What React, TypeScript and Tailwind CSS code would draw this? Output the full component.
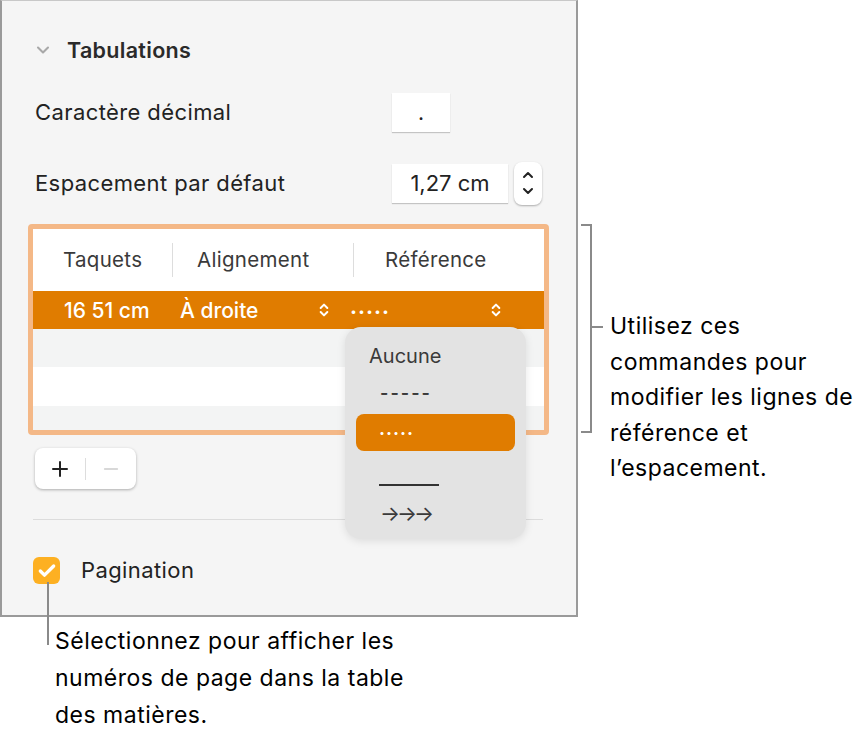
import {Check, ChevronDown, ChevronUp, ChevronsUpDown, Plus, Minus} from 'lucide-react'

const font = {fontFamily: 'Inter, "Noto Sans", sans-serif'}

function Updown({className}: {className: string}) {
  return <ChevronsUpDown className={className} strokeWidth={3} />
}

export default function App() {
  return (
    <div className="relative h-[742px] w-[860px] bg-white text-[#222]" style={font}>
      {/* inspector panel */}
      <div className="flex h-[617px] w-[578px] flex-col border-2 border-t border-[#9a9a9a] border-t-[#c8c8c8] bg-[#f5f5f5] pl-[26px] pr-[34px]">
        <div className="mt-[33px] flex items-center gap-[14px] pl-[5px]">
          <ChevronDown className="size-[20px] text-[#a8a8a8]" strokeWidth={2.5} />
          <span className="text-[21.5px] font-semibold tracking-[0.3px] text-[#2a2a2a]">Tabulations</span>
        </div>

        <div className="mt-[26px] flex h-[40px] items-center pl-[7px]">
          <span className="flex-1 text-[22px] tracking-[0.4px]">Caractère décimal</span>
          <div className="mr-[92px] flex h-[39px] w-[58px] items-center justify-center bg-white text-[21px] shadow-[0_1px_1px_rgba(0,0,0,0.2)]">.</div>
        </div>

        <div className="mt-[29px] flex h-[44px] items-center pl-[7px]">
          <span className="flex-1 text-[22px] tracking-[0.4px]">Espacement par défaut</span>
          <div className="flex h-[39px] w-[116px] items-center justify-center bg-white text-[22px] shadow-[0_1px_1px_rgba(0,0,0,0.2)]">1,27 cm</div>
          <div className="ml-[6px] flex h-[43px] w-[28px] flex-col items-center justify-center rounded-[8px] bg-white shadow-[0_1px_2px_rgba(0,0,0,0.3)]">
            <ChevronUp className="size-[16px]" strokeWidth={3} />
            <ChevronDown className="size-[16px]" strokeWidth={3} />
          </div>
        </div>

        <div className="mt-[19px] h-[211px] w-[521px] rounded-[4px] border-[5px] border-[#f4b887] bg-white">
          <div className="flex h-[62px] items-center text-[20.5px] tracking-[0.3px] text-[#3a3a3a]">
            <span className="w-[139px] pl-[30px]">Taquets</span>
            <span className="h-[34px] w-px bg-[#ddd]" />
            <span className="w-[180px] pl-[24px]">Alignement</span>
            <span className="h-[34px] w-px bg-[#ddd]" />
            <span className="pl-[31px]">Référence</span>
          </div>
          <div className="flex h-[38px] items-center bg-[#e07c00] text-[21px] font-medium text-white">
            <span className="w-[147px] pl-[31px]">16 51 cm</span>
            <span className="w-[136px]">À droite</span>
            <Updown className="size-[16px]" />
            <span className="ml-[18px] w-[138px] -translate-y-[4px] font-bold tracking-[1px]">.....</span>
            <Updown className="size-[16px]" />
          </div>
          <div className="h-[38px] bg-[#f3f4f4]" />
          <div className="h-[39px] bg-white" />
          <div className="h-[24px] bg-[#f3f4f4]" />
        </div>

        <div className="mt-[13px] ml-[7px] flex h-[41px] w-[101px] items-center rounded-[8px] bg-white shadow-[0_1px_3px_rgba(0,0,0,0.3)]">
          <div className="flex w-[50px] justify-center"><Plus className="size-[24px] text-[#222]" strokeWidth={2} /></div>
          <span className="h-[22px] w-px bg-[#ddd]" />
          <div className="flex w-[50px] justify-center"><Minus className="size-[22px] text-[#ccc]" strokeWidth={1.5} /></div>
        </div>

        <div className="mt-[30px] ml-[5px] h-px w-[510px] bg-[#dcdcdc]" />

        <div className="mt-[34px] ml-[5px] flex items-center gap-[21px]">
          <div className="flex size-[27px] items-center justify-center rounded-[6px] bg-[#fdb022]">
            <Check className="size-[20px] text-white" strokeWidth={4} />
          </div>
          <span className="text-[22px] tracking-[0.4px] text-[#222]">Pagination</span>
        </div>
      </div>

      {/* leader popup */}
      <div className="absolute left-[345px] top-[327px] flex h-[212px] w-[181px] flex-col rounded-[16px] bg-[#e3e3e3] px-[11px] pt-[14px] text-[#3a3a3a] shadow-[0_2px_8px_rgba(0,0,0,0.1)]">
        <span className="pl-[13px] text-[20px]">Aucune</span>
        <span className="mt-[8px] pl-[24px] text-[18px] font-semibold tracking-[2px]">-----</span>
        <div className="mt-[8px] flex h-[37px] items-center rounded-[8px] bg-[#e07c00] pl-[23px] text-[18px] font-bold text-white">
          <span className="-translate-y-[4px] tracking-[1px]">.....</span>
        </div>
        <span className="ml-[23px] mt-[33px] h-[2px] w-[60px] bg-[#333]" />
        <span className="mt-[12px] pl-[24px] text-[21px] tracking-[-3px]">→→→</span>
      </div>

      {/* right callout */}
      <div className="absolute left-[581px] top-[224px] h-[209px] w-[11px] border-y-2 border-r-2 border-[#8a8a8a]" />
      <div className="absolute left-[592px] top-[326px] h-[2px] w-[11px] bg-[#8a8a8a]" />
      <p className="absolute left-[610px] top-[309px] w-[245px] text-[23px] leading-[35.5px] tracking-[0.5px] text-black">
        Utilisez ces commandes pour modifier les lignes de référence et l’espacement.
      </p>

      {/* bottom callout */}
      <div className="absolute left-[47px] top-[582px] h-[63px] w-[2px] bg-[#8a8a8a]" />
      <p className="absolute left-[55px] top-[623px] w-[350px] text-[23px] leading-[37px] tracking-[0.5px] text-black">
        Sélectionnez pour afficher les numéros de page dans la table des matières.
      </p>
    </div>
  )
}
